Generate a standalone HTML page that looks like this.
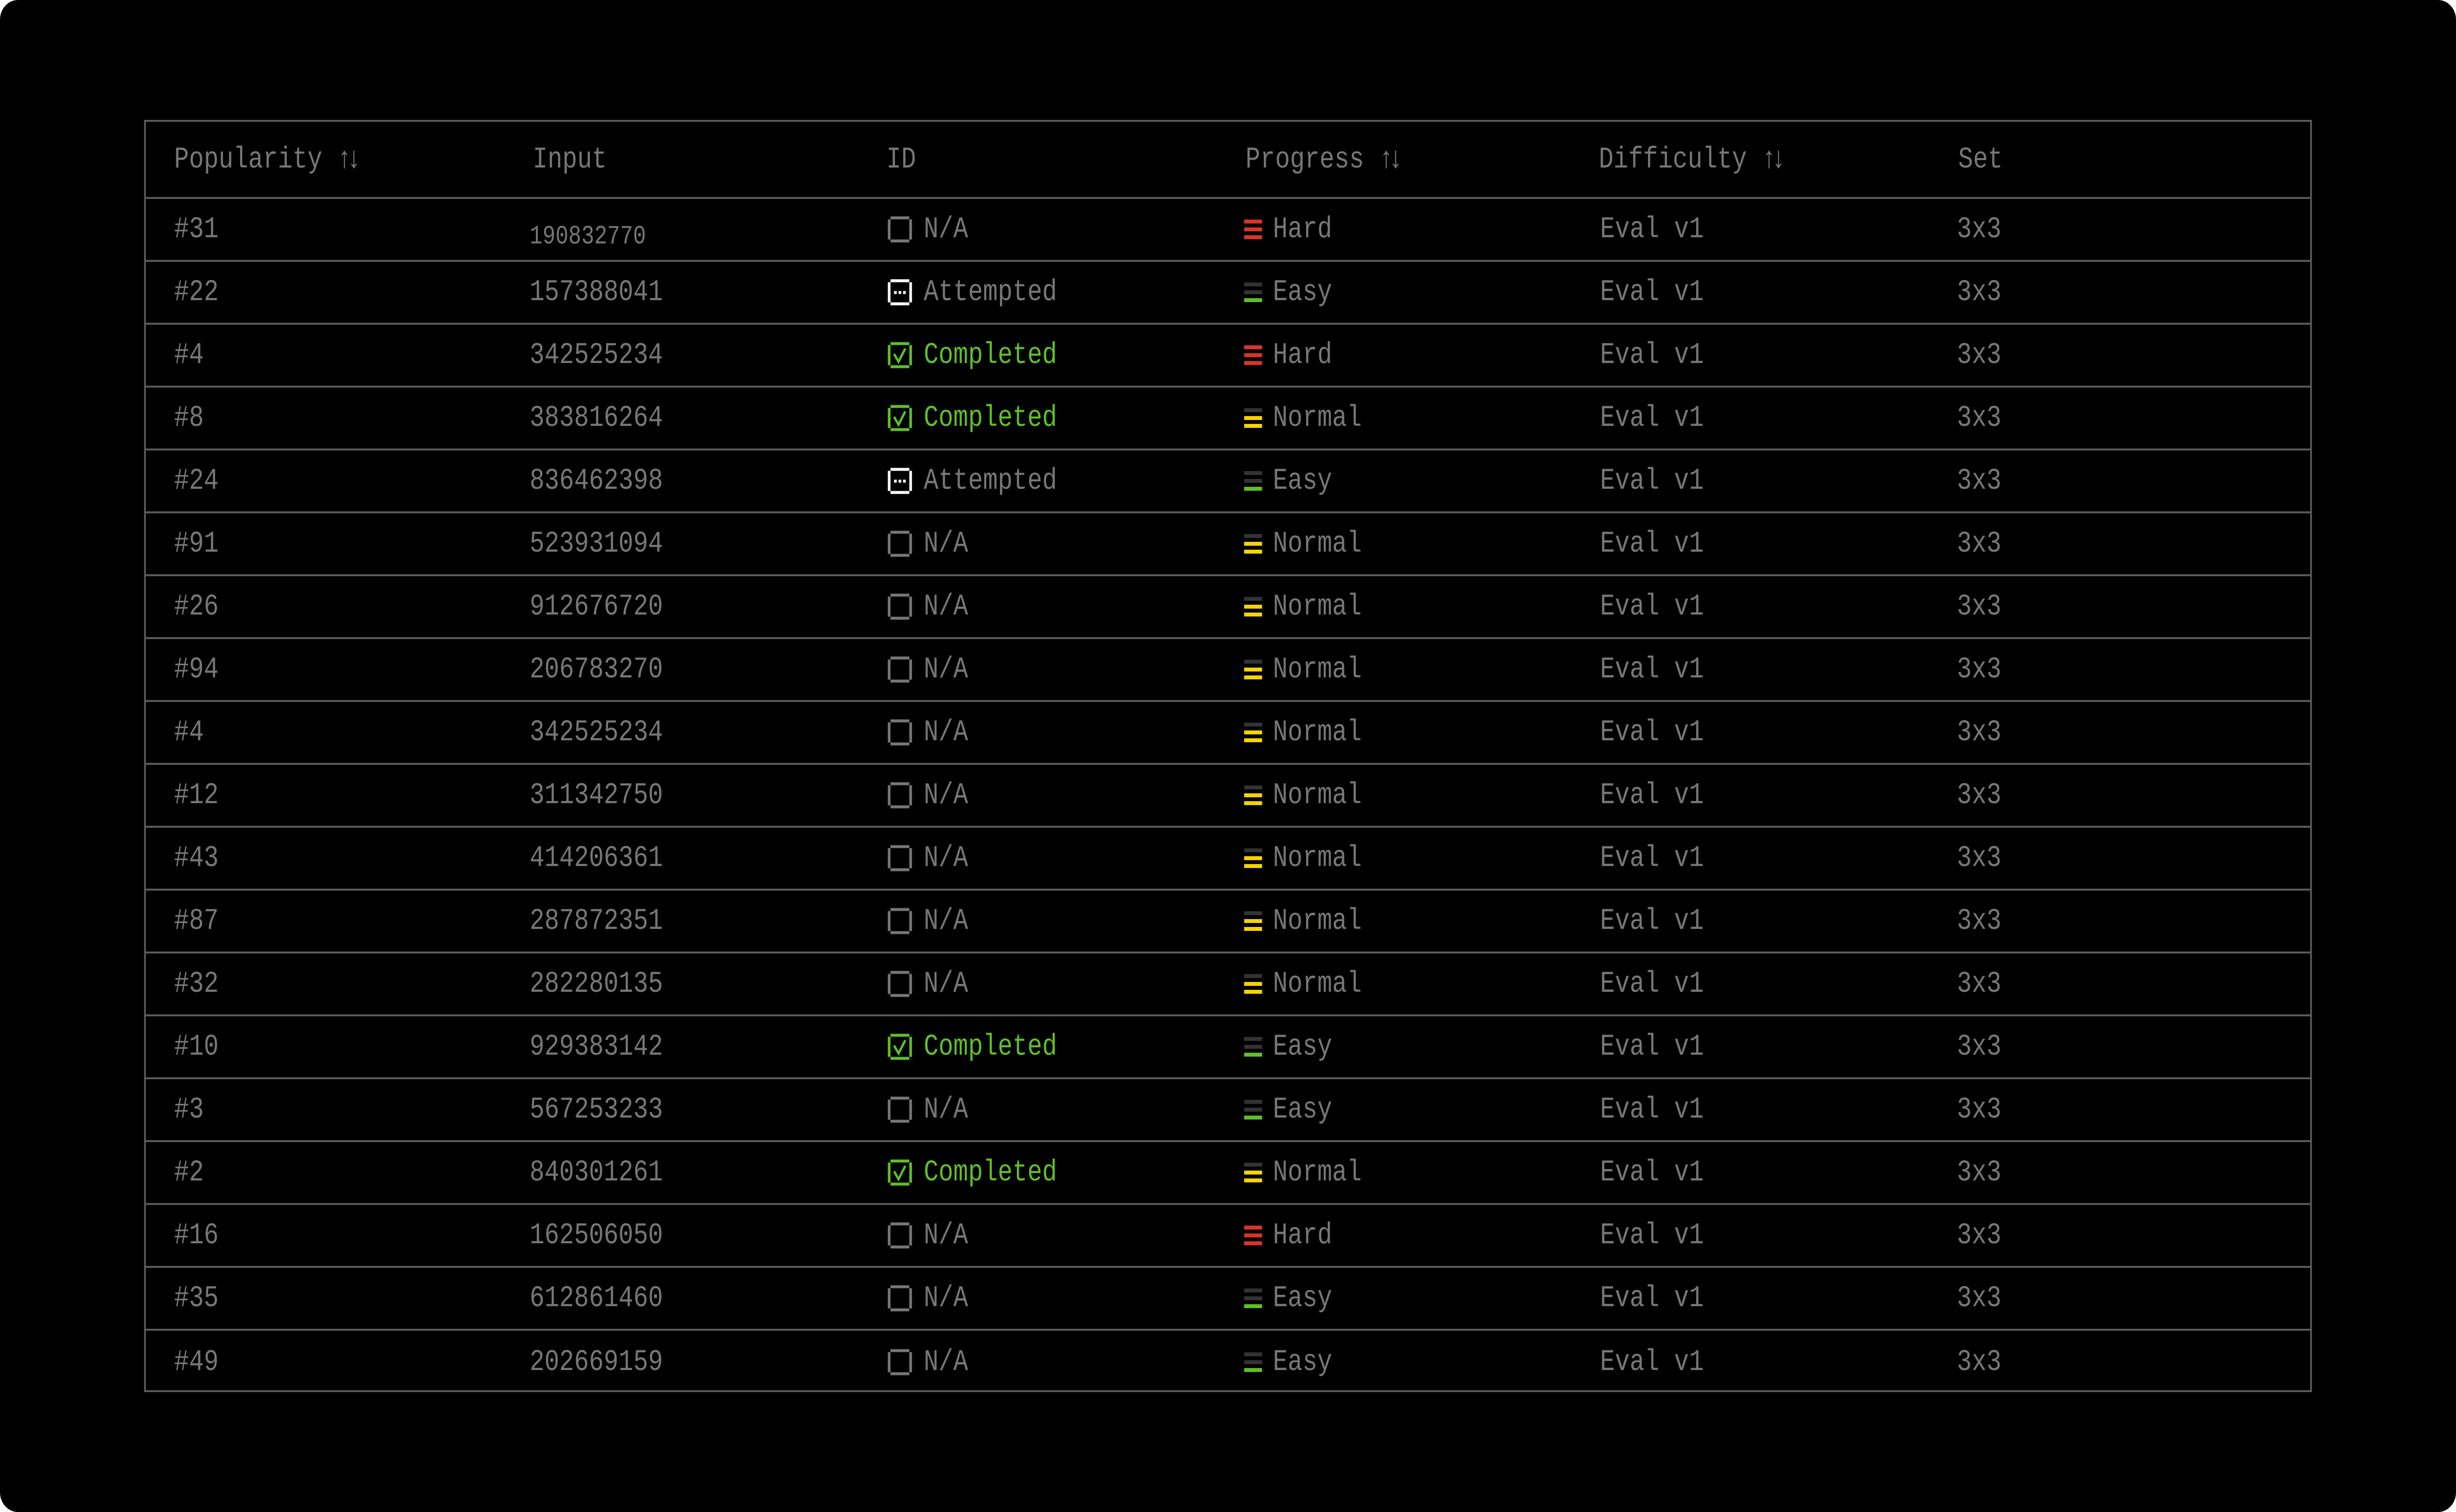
<!DOCTYPE html>
<html><head><meta charset="utf-8"><meta name="viewport" content="width=5472, initial-scale=1"><style>
html,body{margin:0;padding:0;background:#fff;overflow:hidden;}
#root{position:absolute;left:0;top:0;transform-origin:0 0;width:5472px;height:3078px;background:#000;border-radius:40px;overflow:hidden;font-family:"Liberation Mono",monospace;font-size:55px;color:#777;}
#tbl{position:absolute;left:321px;top:244px;width:4822px;height:2582px;border:4px solid #5a5a5a;}
.hd{position:absolute;left:0;top:0;width:100%;height:157px;border-bottom:4px solid #5a5a5a;box-sizing:border-box;}
.row{position:absolute;left:0;width:100%;height:128px;box-sizing:border-box;border-bottom:4px solid #5a5a5a;}
.c{position:absolute;top:50%;transform:translateY(-50%) scaleY(1.12);white-space:nowrap;line-height:1;}
.ic{position:absolute;top:50%;transform:translateY(-50%);}
.bars{position:absolute;left:2447px;top:50%;transform:translateY(-50%);width:40px;height:40px;}
.bars i{display:block;height:8px;margin-bottom:8px;background:#333;}
.g{color:#5fbf2a;}
</style></head><body><div id="root"><div id="tbl">
<div class="hd">
<div class="c" style="left:63px">Popularity <span style="letter-spacing:-12px">↑↓</span></div>
<div class="c" style="left:862px">Input</div>
<div class="c" style="left:1650px">ID</div>
<div class="c" style="left:2450px">Progress <span style="letter-spacing:-12px">↑↓</span></div>
<div class="c" style="left:3237px">Difficulty <span style="letter-spacing:-12px">↑↓</span></div>
<div class="c" style="left:4038px">Set</div>
</div>
<div id="rows"></div>
</div></div>
<script>
var data=[
["#31","190832770","n","h"],["#22","157388041","a","e"],["#4","342525234","c","h"],["#8","383816264","c","n"],
["#24","836462398","a","e"],["#91","523931094","n","n"],["#26","912676720","n","n"],["#94","206783270","n","n"],
["#4","342525234","n","n"],["#12","311342750","n","n"],["#43","414206361","n","n"],["#87","287872351","n","n"],
["#32","282280135","n","n"],["#10","929383142","c","e"],["#3","567253233","n","e"],["#2","840301261","c","n"],
["#16","162506050","n","h"],["#35","612861460","n","e"],["#49","202669159","n","e"]];
var box='<path d="M6 0H48V6H54V47H48V53H6V47H0V6H6Z M6 6V47H48V6Z" fill-rule="evenodd" fill="C"/>';
function icon(t){
 var col=t=="n"?"#777":t=="a"?"#fff":"#5fbf2a";
 var s='<svg class="ic" style="left:1653px" width="54" height="53" viewBox="0 0 54 53">'+box.replace("C",col);
 if(t=="a")s+='<rect x="14" y="24" width="6" height="6" fill="#fff"/><rect x="24" y="24" width="6" height="6" fill="#fff"/><rect x="34" y="24" width="6" height="6" fill="#fff"/>';
 if(t=="c")s+='<path d="M14 24L24 40L39 13" stroke="#5fbf2a" stroke-width="5" fill="none"/>';
 return s+'</svg>';
}
var lab={n:"N/A",a:"Attempted",c:"Completed"};
var dl={h:"Hard",n:"Normal",e:"Easy"};
var bc={h:["#d93425","#d93425","#d93425"],n:["#333","#f5d400","#f5d400"],e:["#333","#333","#5fbf2a"]};
var h="";
data.forEach(function(r,i){
 var top=157+128*i;
 var last=i==data.length-1?"border-bottom:none;":"";
 var inp=i==0?'<div class="c" style="left:855px;top:62%;font-size:48px">'+r[1]+'</div>':'<div class="c" style="left:855px">'+r[1]+'</div>';
 var b=bc[r[3]];
 h+='<div class="row" style="top:'+top+'px;'+last+'">'+
 '<div class="c" style="left:63px">'+r[0]+'</div>'+inp+icon(r[2])+
 '<div class="c'+(r[2]=="c"?" g":"")+'" style="left:1733px">'+lab[r[2]]+'</div>'+
 '<div class="bars"><i style="background:'+b[0]+'"></i><i style="background:'+b[1]+'"></i><i style="background:'+b[2]+'"></i></div>'+
 '<div class="c" style="left:2511px">'+dl[r[3]]+'</div>'+
 '<div class="c" style="left:3240px">Eval v1</div>'+
 '<div class="c" style="left:4035px">3x3</div></div>';
});
document.getElementById("rows").innerHTML=h;
function fit(){
 var w=window.innerWidth||document.documentElement.clientWidth;
 var hh=window.innerHeight||document.documentElement.clientHeight;
 var sx=w/5472,sy=hh/3078;
 if(!(sx>0))sx=1;if(!(sy>0))sy=1;
 document.getElementById("root").style.transform=(sx===1&&sy===1)?"":"scale("+sx+","+sy+")";
}
fit();window.addEventListener("resize",fit);
</script>
</body></html>
